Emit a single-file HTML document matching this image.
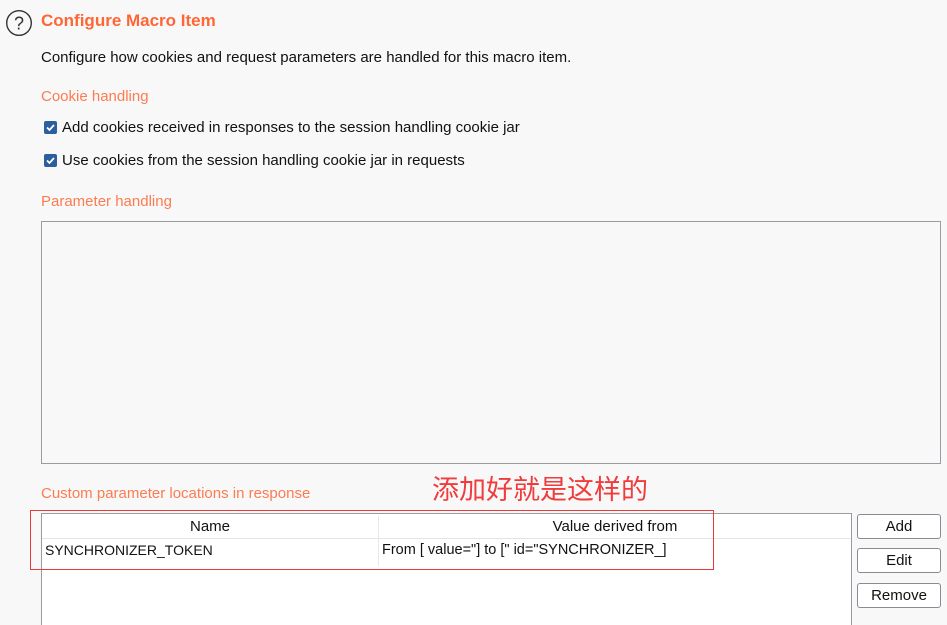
<!DOCTYPE html>
<html><head><meta charset="utf-8"><style>
html,body{margin:0;width:947px;height:625px;overflow:hidden}
body{background:#f8f8f9;font-family:"Liberation Sans","Noto Sans CJK SC",sans-serif;color:#111;position:relative;font-size:15px}
.a{position:absolute;white-space:nowrap}
.or{color:#ff6633}
.cb{position:absolute;width:13px;height:13px;background:#2b5f9e;border-radius:2px}
.btn{position:absolute;left:857px;width:82px;height:23px;border:1px solid #8a8a94;border-radius:3px;background:#fff;text-align:center;line-height:23px;font-size:15px}
</style></head><body>
<svg class="a" style="left:5px;top:9px" width="28" height="28" viewBox="0 0 28 28"><circle cx="14" cy="14" r="12.3" fill="none" stroke="#333" stroke-width="1.4"/><text x="14" y="20.5" text-anchor="middle" font-size="18" font-family="Liberation Sans" fill="#333">?</text></svg>
<div class="a or" style="left:41px;top:11px;font-size:17px;font-weight:bold">Configure Macro Item</div>
<div class="a" style="left:41px;top:49px">Configure how cookies and request parameters are handled for this macro item.</div>
<div class="a or" style="left:41px;top:88px;opacity:.85">Cookie handling</div>
<div class="cb" style="left:44px;top:121px"><svg width="13" height="13"><path d="M3 6.5l2.5 2.5 4.5-5" stroke="#fff" stroke-width="1.8" fill="none"/></svg></div>
<div class="a" style="left:62px;top:119px">Add cookies received in responses to the session handling cookie jar</div>
<div class="cb" style="left:44px;top:154px"><svg width="13" height="13"><path d="M3 6.5l2.5 2.5 4.5-5" stroke="#fff" stroke-width="1.8" fill="none"/></svg></div>
<div class="a" style="left:62px;top:152px">Use cookies from the session handling cookie jar in requests</div>
<div class="a or" style="left:41px;top:193px;opacity:.85">Parameter handling</div>
<div class="a" style="left:41px;top:221px;width:898px;height:241px;border:1px solid #9a9aa2;background:#f8f8f9"></div>
<div class="a or" style="left:41px;top:485px;opacity:.85">Custom parameter locations in response</div>
<div class="a" style="left:432px;top:470px;font-size:27px;color:#f03c3c;font-family:'Noto Sans CJK SC',sans-serif;line-height:36px">添加好就是这样的</div>
<div class="a" style="left:41px;top:513px;width:809px;height:130px;border:1px solid #9a9aa2;background:#fff"></div>
<div class="a" style="left:42px;top:538px;width:809px;height:1px;background:#e4e4e4"></div>
<div class="a" style="left:378px;top:516px;width:1px;height:50px;background:#e8e8e8"></div>
<div class="a" style="left:42px;top:518px;width:336px;text-align:center">Name</div>
<div class="a" style="left:379px;top:518px;width:472px;text-align:center">Value derived from</div>
<div class="a" style="left:45px;top:542px;font-size:14px">SYNCHRONIZER_TOKEN</div>
<div class="a" style="left:382px;top:542px;font-size:14.5px">From [ value="] to [" id="SYNCHRONIZER_]</div>
<div class="a" style="left:30px;top:510px;width:682px;height:58px;border:1px solid #e83a3a"></div>
<div class="btn" style="top:514px">Add</div>
<div class="btn" style="top:548px">Edit</div>
<div class="btn" style="top:583px">Remove</div>
</body></html>
